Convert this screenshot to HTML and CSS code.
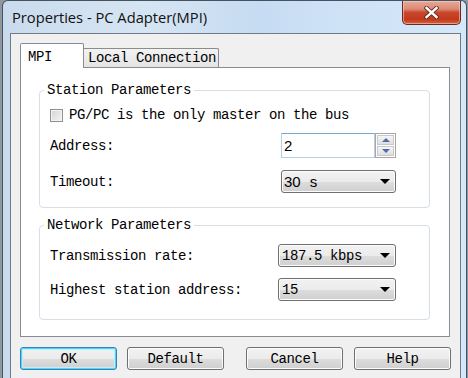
FILE: index.html
```html
<!DOCTYPE html>
<html lang="en">
<head>
    <meta charset="UTF-8">
    <title>Properties - PC Adapter(MPI)</title>
    <link rel="stylesheet" href="styles.css">
</head>
<body>
    <div class="window">
        <!-- Title bar -->
        <div class="titlebar">
            <span class="title">Properties - PC Adapter(MPI)</span>
            <button class="close-btn">
                <svg width="15" height="13" viewBox="0 0 15 13">
                    <path d="M2.5 2 L12.5 11 M12.5 2 L2.5 11" stroke="#5a2418" stroke-width="4.2" stroke-linecap="square"/>
                    <path d="M2.5 2 L12.5 11 M12.5 2 L2.5 11" stroke="#ffffff" stroke-width="2.4" stroke-linecap="square"/>
                </svg>
            </button>
        </div>

        <div class="client">
            <!-- Tabs -->
            <div class="tabs">
                <div class="tab active">MPI</div>
                <div class="tab local">Local Connection</div>
            </div>

            <div class="panel">
                <!-- Station Parameters -->
                <div class="group station">
                    <div class="group-title">Station Parameters</div>
                    <label class="check-row"><span class="checkbox"></span>PG/PC is the only master on the bus</label>
                    <div class="row address-row">
                        <span>Address:</span>
                        <div class="spin">
                            <div class="spin-text">2</div>
                            <div class="spin-btns">
                                <span class="spin-btn"><span class="arrow-up"></span></span>
                                <span class="spin-btn"><span class="arrow-down"></span></span>
                            </div>
                        </div>
                    </div>
                    <div class="row timeout-row">
                        <span>Timeout:</span>
                        <div class="combo combo-timeout sans">30 s<span class="drop"></span></div>
                    </div>
                </div>

                <!-- Network Parameters -->
                <div class="group network">
                    <div class="group-title">Network Parameters</div>
                    <div class="row rate-row">
                        <span>Transmission rate:</span>
                        <div class="combo combo-wide">187.5 kbps<span class="drop"></span></div>
                    </div>
                    <div class="row highest-row">
                        <span>Highest station address:</span>
                        <div class="combo combo-wide">15<span class="drop"></span></div>
                    </div>
                </div>
            </div>

            <!-- Dialog buttons -->
            <div class="buttons">
                <div class="btn-group">
                    <button class="btn default-btn">OK</button>
                    <button class="btn">Default</button>
                </div>
                <div class="btn-group right">
                    <button class="btn">Cancel</button>
                    <button class="btn">Help</button>
                </div>
            </div>
        </div>
    </div>
</body>
</html>
```

FILE: styles.css
```css
body {
    margin: 0;
    background-color: #8f989f;
    font-family: 'Liberation Mono', monospace;
    font-size: 14px;
    letter-spacing: -0.4px;
    color: #000;
    overflow: hidden;
}

.window {
    margin: 0 1px 0 2px;
    height: 378px;
    box-sizing: border-box;
    border: 1px solid #45525f;
    border-bottom: none;
    border-radius: 6px 6px 0 0;
    background: linear-gradient(to right, #c9dbed 0%, #d6e5f3 30%, #c6dcf2 55%, #cfe3f7 75%, #d5e8f9 100%);
    display: flex;
    flex-direction: column;
}

.titlebar {
    height: 32px;
    display: flex;
    align-items: flex-start;
    padding-left: 9px;
}

.title {
    align-self: center;
    font-family: 'Open Sans', sans-serif;
    font-size: 14.7px;
    letter-spacing: 0;
    color: #111;
}

.close-btn {
    margin-left: auto;
    margin-right: 5px;
    width: 59px;
    height: 24px;
    padding: 0;
    border: 1px solid #6b2a1d;
    border-top: none;
    border-radius: 0 0 5px 5px;
    background: linear-gradient(to bottom, #e6a898 0%, #dc8a76 35%, #c9472c 50%, #c2391c 80%, #d2643f 100%);
    box-shadow: inset 0 0 0 1px rgba(255, 220, 210, 0.5);
    display: flex;
    justify-content: center;
    align-items: center;
}

.client {
    flex: 1;
    margin: 0 5px 0 7px;
    border: 1px solid #6f7b87;
    border-bottom: none;
    background-color: #f0f0f0;
    padding: 9px 10px 0 9px;
}

/* Tabs */
.tabs {
    display: flex;
    align-items: flex-end;
    height: 24px;
}

.tab {
    box-sizing: border-box;
    border: 1px solid #898c95;
    border-bottom: none;
    border-radius: 2px 2px 0 0;
    line-height: 17px;
}

.tab.active {
    position: relative;
    z-index: 1;
    width: 64px;
    height: 25px;
    margin-bottom: -1px;
    padding: 5px 0 0 7px;
    background-color: #fff;
}

.tab.local {
    width: 136px;
    height: 19px;
    margin-left: -1px;
    padding: 1px 0 0 4px;
    background: linear-gradient(to bottom, #f3f3f3, #e4e4e4);
}

.panel {
    border: 1px solid #898c95;
    background-color: #fff;
    padding: 22px 0 16px 18px;
}

/* Group boxes */
.group {
    width: 391px;
    box-sizing: border-box;
    border: 1px solid #d5dfe5;
    border-radius: 4px;
    padding: 0 33px 14px 10px;
}

.group.network {
    margin-top: 17px;
    padding-bottom: 18px;
}

.group-title {
    width: fit-content;
    margin: -9px 0 0 -6px;
    padding: 0 3px;
    line-height: 16px;
    background-color: #fff;
}

.check-row {
    display: flex;
    align-items: center;
    height: 22px;
    margin-top: 6px;
}

.checkbox {
    width: 11px;
    height: 11px;
    margin-right: 6px;
    border: 1px solid #8e8f8f;
    background: linear-gradient(135deg, #d4d4d4, #f4f4f4);
    box-shadow: inset 0 0 0 1px #f4f4f4;
}

.row {
    display: flex;
    justify-content: space-between;
    align-items: center;
}

.address-row {
    height: 25px;
    margin-top: 7px;
}

.timeout-row {
    height: 23px;
    margin-top: 12px;
}

.rate-row {
    height: 23px;
    margin-top: 11px;
}

.highest-row {
    height: 23px;
    margin-top: 11px;
}

/* Spin box */
.spin {
    display: flex;
    width: 115px;
    height: 25px;
}

.spin-text {
    flex: 1;
    box-sizing: border-box;
    border: 1px solid #b6d0ea;
    border-top-color: #7aa6d4;
    padding-left: 2px;
    font-family: 'Liberation Sans', sans-serif;
    font-size: 15px;
    letter-spacing: 0;
    line-height: 23px;
}

.spin-btns {
    width: 21px;
    box-sizing: border-box;
    border: 1px solid #a7a7a7;
    padding: 1px;
    display: flex;
    flex-direction: column;
    gap: 1px;
}

.spin-btn {
    flex: 1;
    border: 1px solid #c9c9c9;
    background: linear-gradient(to bottom, #f6f6f6, #dedede);
    display: flex;
    justify-content: center;
    align-items: center;
}

.arrow-up {
    border-left: 4px solid transparent;
    border-right: 4px solid transparent;
    border-bottom: 4px solid #4c6cae;
}

.arrow-down {
    border-left: 4px solid transparent;
    border-right: 4px solid transparent;
    border-top: 4px solid #4c6cae;
}

/* Combo boxes and buttons */
.combo, .btn {
    box-sizing: border-box;
    border: 1px solid #707070;
    border-radius: 3px;
    background: linear-gradient(to bottom, #f2f2f2 0%, #ebebeb 50%, #dddddd 51%, #cfcfcf 100%);
    box-shadow: inset 0 0 0 1px #fcfcfc;
}

.combo {
    display: flex;
    align-items: center;
    height: 23px;
    padding-left: 3px;
}

.combo-timeout {
    width: 115px;
}

.combo-wide {
    width: 118px;
}

.combo.sans {
    font-family: 'Liberation Sans', sans-serif;
    font-size: 15px;
    letter-spacing: 0;
    word-spacing: 5px;
    padding-left: 2px;
}

.drop {
    margin-left: auto;
    margin-right: 5px;
    border-left: 5px solid transparent;
    border-right: 5px solid transparent;
    border-top: 5px solid #000;
}

.buttons {
    display: flex;
    justify-content: space-between;
    margin-top: 10px;
}

.btn-group {
    display: flex;
    gap: 10px;
}

.btn-group.right {
    gap: 11px;
    margin-right: -1px;
}

.btn {
    width: 97px;
    height: 23px;
    padding: 0;
    font-family: 'Liberation Mono', monospace;
    font-size: 14px;
    letter-spacing: -0.4px;
    color: #000;
}

.default-btn {
    border-color: #3c7fb1;
    box-shadow: inset 0 0 0 1px #48d8fb, inset 0 0 0 2px #c6ecfb;
}
```
